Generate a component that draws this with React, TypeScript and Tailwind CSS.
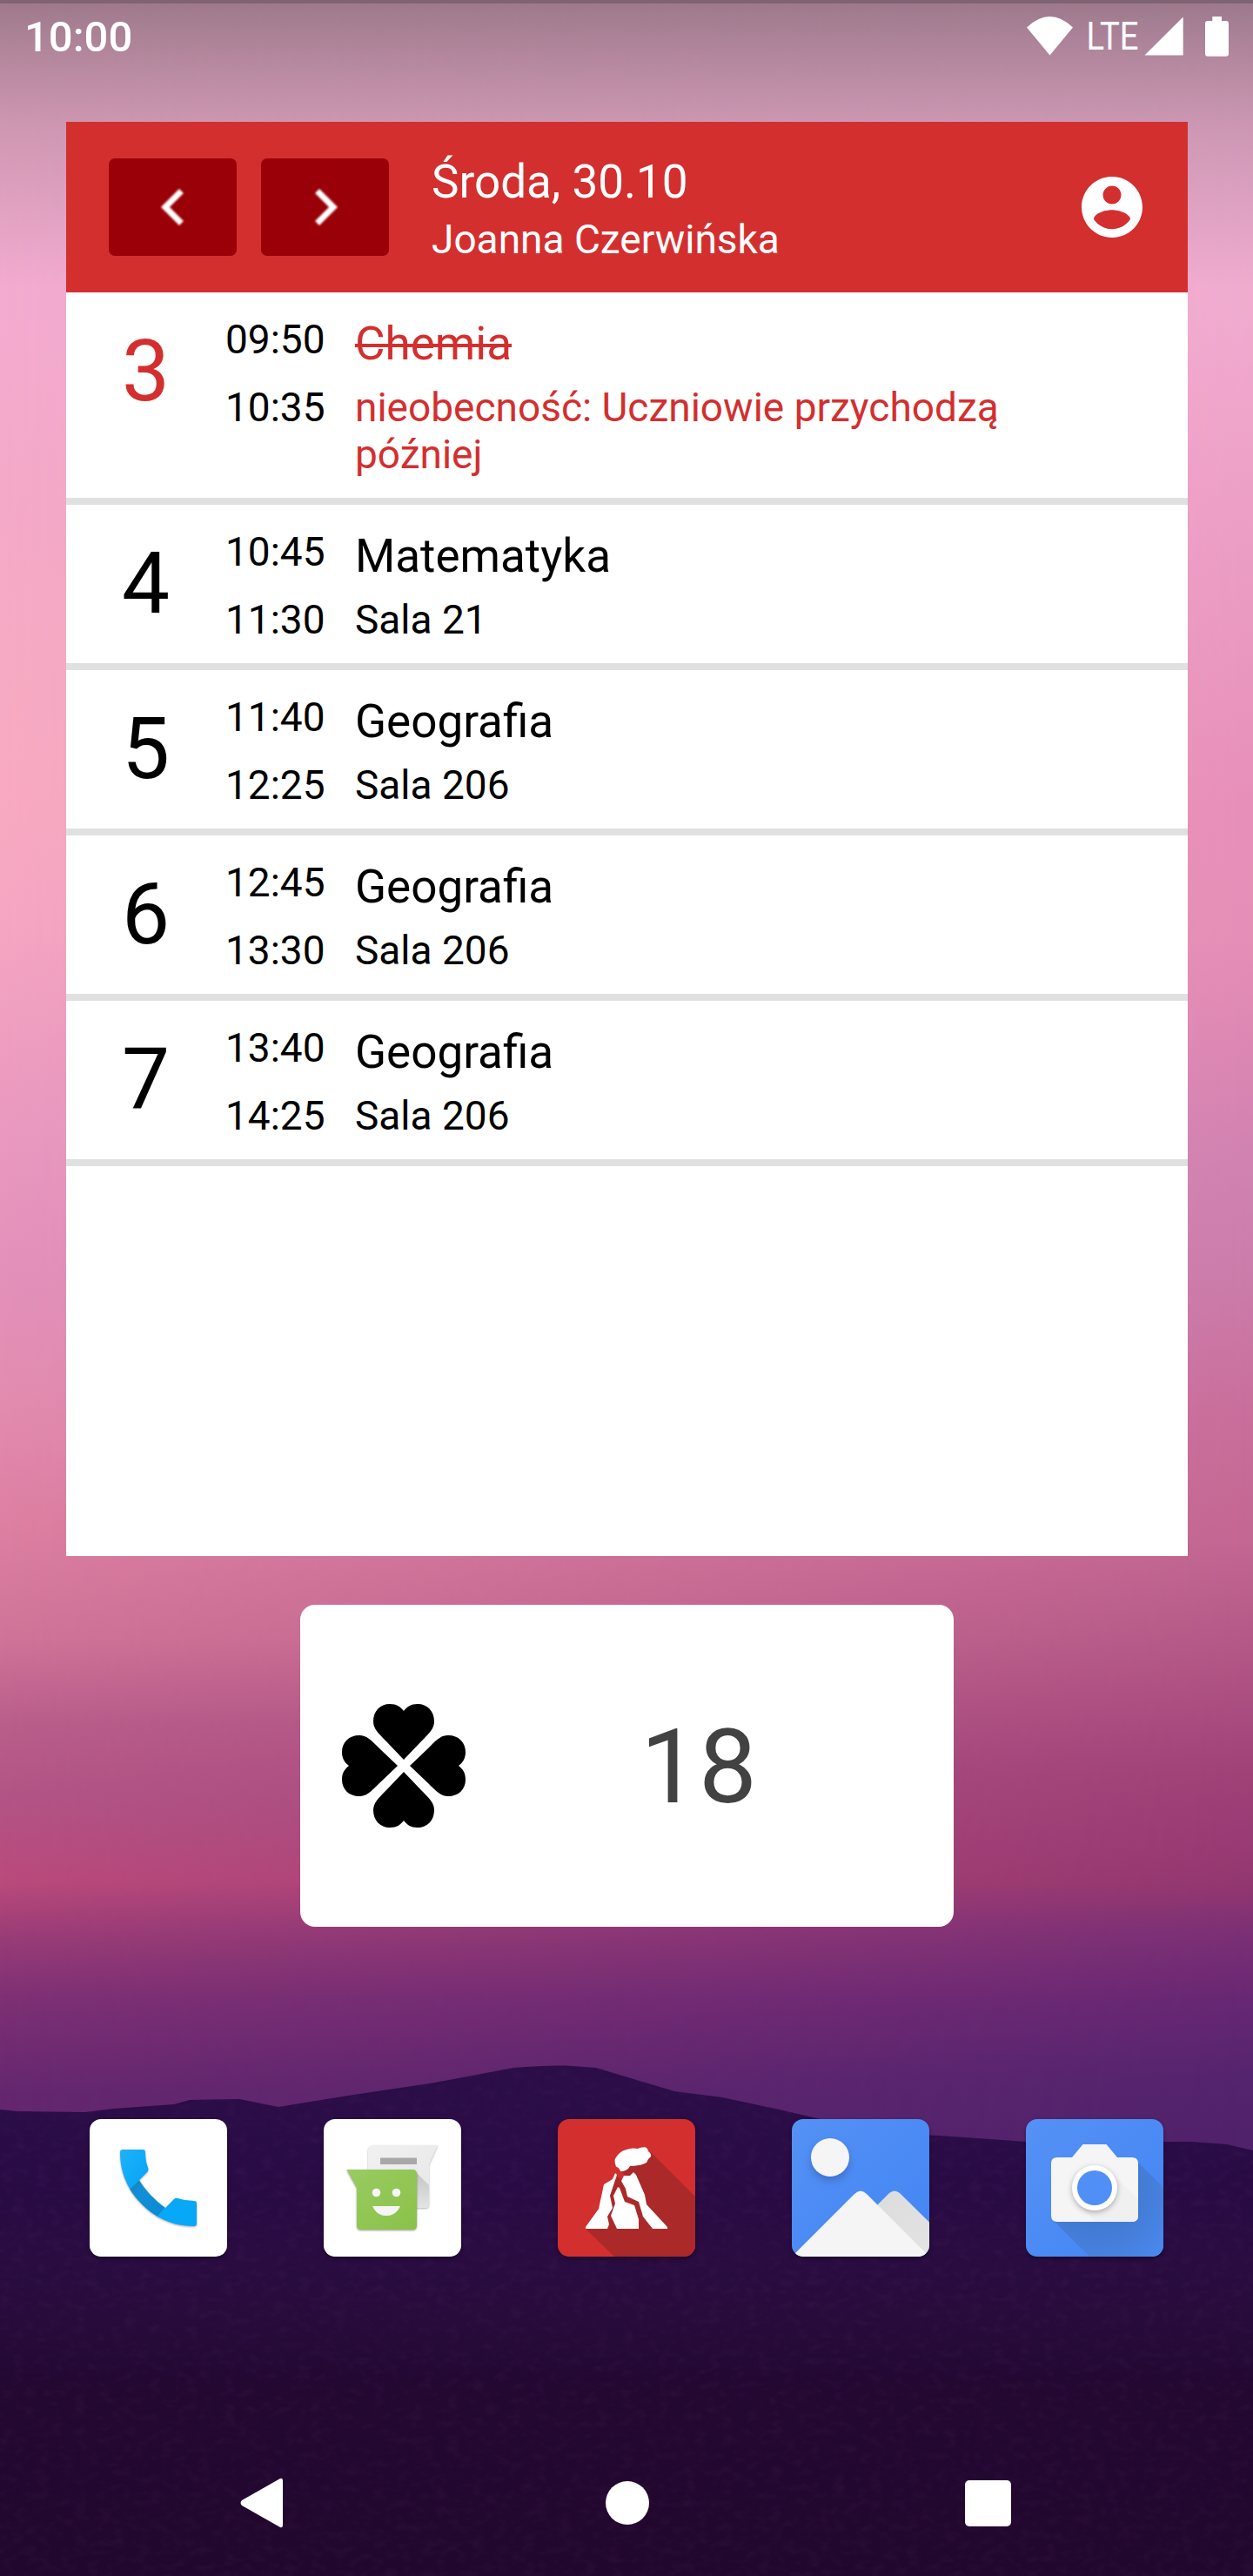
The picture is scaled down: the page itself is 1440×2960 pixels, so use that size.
import React from "react";

type Lesson = {
  number: number;
  start: string;
  end: string;
  subject: string;
  detail: string;
  cancelled?: boolean;
};

const lessons: Lesson[] = [
  { number: 3, start: "09:50", end: "10:35", subject: "Chemia", detail: "nieobecność: Uczniowie przychodzą później", cancelled: true },
  { number: 4, start: "10:45", end: "11:30", subject: "Matematyka", detail: "Sala 21" },
  { number: 5, start: "11:40", end: "12:25", subject: "Geografia", detail: "Sala 206" },
  { number: 6, start: "12:45", end: "13:30", subject: "Geografia", detail: "Sala 206" },
  { number: 7, start: "13:40", end: "14:25", subject: "Geografia", detail: "Sala 206" },
];

const hills =
  "M0 2424L20 2426L98 2427L130 2423L200 2418L218 2413L275 2412L320 2421L400 2408L500 2393L590 2376Q625 2373 650 2373.500L685 2376L725 2388L775 2403L830 2410L900 2425L985 2445Q1030 2453 1080 2454L1180 2461L1370 2461L1410 2464L1440 2471V2960H0Z";

function Wallpaper() {
  return (
    <svg className="absolute inset-0 h-full w-full" viewBox="0 0 1440 2960" preserveAspectRatio="none" aria-hidden="true">
      <defs>
        <linearGradient id="skyLeft" gradientUnits="userSpaceOnUse" x1="0" y1="0" x2="0" y2="2960">
          <stop offset="0" stopColor="#f3adcf" />
          <stop offset="0.12" stopColor="#f3abcf" />
          <stop offset="0.194" stopColor="#f4a9c8" />
          <stop offset="0.241" stopColor="#f6aac4" />
          <stop offset="0.306" stopColor="#f8aac2" />
          <stop offset="0.357" stopColor="#f5a6c2" />
          <stop offset="0.404" stopColor="#ee9ec0" />
          <stop offset="0.45" stopColor="#e897bf" />
          <stop offset="0.497" stopColor="#e391ba" />
          <stop offset="0.543" stopColor="#e38cb0" />
          <stop offset="0.59" stopColor="#dd80a2" />
          <stop offset="0.636" stopColor="#d07498" />
          <stop offset="0.669" stopColor="#b95e8b" />
          <stop offset="0.697" stopColor="#b25586" />
          <stop offset="0.73" stopColor="#ba4a7c" />
          <stop offset="0.753" stopColor="#983c76" />
          <stop offset="0.776" stopColor="#7e3074" />
          <stop offset="0.813" stopColor="#64276f" />
        </linearGradient>
        <linearGradient id="skyRight" gradientUnits="userSpaceOnUse" x1="0" y1="0" x2="0" y2="2960">
          <stop offset="0" stopColor="#f0acd0" />
          <stop offset="0.12" stopColor="#f0abcf" />
          <stop offset="0.148" stopColor="#f0a6cc" />
          <stop offset="0.242" stopColor="#ea99c0" />
          <stop offset="0.312" stopColor="#e78fb8" />
          <stop offset="0.364" stopColor="#e58eb6" />
          <stop offset="0.406" stopColor="#dc87b3" />
          <stop offset="0.458" stopColor="#cf81b0" />
          <stop offset="0.5" stopColor="#cb7ba9" />
          <stop offset="0.547" stopColor="#c96e9b" />
          <stop offset="0.599" stopColor="#c26692" />
          <stop offset="0.641" stopColor="#b25786" />
          <stop offset="0.688" stopColor="#a04178" />
          <stop offset="0.717" stopColor="#983a73" />
          <stop offset="0.731" stopColor="#93376f" />
          <stop offset="0.749" stopColor="#7c3075" />
          <stop offset="0.777" stopColor="#672773" />
          <stop offset="0.806" stopColor="#55246e" />
          <stop offset="0.829" stopColor="#50226b" />
        </linearGradient>
        <linearGradient id="fade" x1="0" y1="0" x2="1" y2="0">
          <stop offset="0" stopColor="#000" />
          <stop offset="1" stopColor="#fff" />
        </linearGradient>
        <mask id="rightMask">
          <rect width="1440" height="2960" fill="url(#fade)" />
        </mask>
        <linearGradient id="ground" gradientUnits="userSpaceOnUse" x1="0" y1="2370" x2="0" y2="2960">
          <stop offset="0" stopColor="#2b0d48" />
          <stop offset="0.25" stopColor="#290b44" />
          <stop offset="0.45" stopColor="#290c3e" />
          <stop offset="0.62" stopColor="#230832" />
          <stop offset="1" stopColor="#21072d" />
        </linearGradient>
        <linearGradient id="shade" gradientUnits="userSpaceOnUse" x1="0" y1="0" x2="0" y2="330">
          <stop offset="0" stopColor="#404040" stopOpacity="0.48" />
          <stop offset="0.45" stopColor="#505050" stopOpacity="0.22" />
          <stop offset="1" stopColor="#505050" stopOpacity="0" />
        </linearGradient>
        <filter id="soil" x="0" y="0" width="1" height="1">
          <feTurbulence type="fractalNoise" baseFrequency="0.07 0.11" numOctaves="2" seed="4" />
          <feColorMatrix values="0 0 0 0 0.36  0 0 0 0 0.1  0 0 0 0 0.4  1.600 0 0 0 -0.720" />
          <feComposite in2="SourceGraphic" operator="in" />
        </filter>
      </defs>
      <rect width="1440" height="2960" fill="url(#skyLeft)" />
      <rect width="1440" height="2960" fill="url(#skyRight)" mask="url(#rightMask)" />
      <path d={hills} fill="url(#ground)" />
      <path d={hills} filter="url(#soil)" opacity="0.09" />
      <rect width="1440" height="330" fill="url(#shade)" />
      <rect width="1440" height="4" fill="#4b3a48" fillOpacity="0.35" />
    </svg>
  );
}

function StatusBar() {
  return (
    <div className="flex h-[140px] items-start justify-between">
      <div className="ml-[28px] mt-[14px] text-[49px] font-medium leading-[58px]">10:00</div>
      <svg className="mr-[20px] mt-[10px] h-[60px] w-[250px]" viewBox="1170 10 250 60" fill="#fff">
        <path d="M1180 31.500Q1206.500 6.500 1233 31.500L1206.500 63.500Z" />
        <text x="1248.500" y="57" fontSize="43.600" textLength="60" lengthAdjust="spacingAndGlyphs">LTE</text>
        <path d="M1359.700 19.500V63.500H1315.500Z" />
        <path d="M1393.300 19H1404V24H1409Q1412 24 1412 27V61.500Q1412 64.700 1409 64.700H1388Q1385 64.700 1385 61.500V27Q1385 24 1388 24H1393.300Z" />
      </svg>
    </div>
  );
}

function ArrowButton({ direction }: { direction: "left" | "right" }) {
  return (
    <button className="flex h-[112px] w-[147px] items-center justify-center rounded-[7px] bg-[#9a0007]" aria-label={direction}>
      <svg className="h-[84px] w-[84px] blur-[1px]" viewBox="0 0 24 24" fill="#fff">
        {direction === "left" ? (
          <path d="M15.410 7.410L14 6l-6 6 6 6 1.410-1.410L10.830 12z" />
        ) : (
          <path d="M10 6L8.590 7.410 13.170 12l-4.580 4.590L10 18l6-6z" />
        )}
      </svg>
    </button>
  );
}

function LessonRow({ lesson }: { lesson: Lesson }) {
  const accent = lesson.cancelled ? "text-[#d32f2f]" : "text-black";
  return (
    <div className="flex items-start border-b-[8px] border-[#e0e0e0] pb-[23px] text-black">
      <div className={`mt-[33px] w-[183px] text-center text-[98px] leading-[115px] ${accent}`}>{lesson.number}</div>
      <div className="mt-[27px] flex w-[149px] flex-col gap-[24px] text-[46px] leading-[54px]">
        <span>{lesson.start}</span>
        <span>{lesson.end}</span>
      </div>
      <div className={`mt-[28px] flex w-[800px] flex-col items-start gap-[15px] ${accent}`}>
        <span className={`text-[53px] leading-[62px] ${lesson.cancelled ? "line-through decoration-[4px]" : ""}`}>{lesson.subject}</span>
        <span className="text-[46px] leading-[54px]">{lesson.detail}</span>
      </div>
    </div>
  );
}

function TimetableWidget() {
  return (
    <section className="ml-[76px] h-[1648px] w-[1289px] bg-white">
      <header className="flex h-[196px] items-center bg-[#d32f2f] pl-[49px] pr-[45px]">
        <ArrowButton direction="left" />
        <div className="w-[28px]" />
        <ArrowButton direction="right" />
        <div className="ml-[49px] mt-[4px] flex-1">
          <div className="text-[53px] leading-[62px]">Środa, 30.10</div>
          <div className="mt-[8px] text-[46px] leading-[54px]">Joanna Czerwińska</div>
        </div>
        <svg className="h-[84px] w-[84px]" viewBox="0 0 24 24" fill="#fff">
          <path d="M12 2C6.480 2 2 6.480 2 12s4.480 10 10 10 10-4.480 10-10S17.520 2 12 2zm0 3c1.660 0 3 1.340 3 3s-1.340 3-3 3-3-1.340-3-3 1.340-3 3-3zm0 14.200c-2.500 0-4.710-1.280-6-3.220.030-1.990 4-3.080 6-3.080 1.990 0 5.970 1.090 6 3.080-1.290 1.940-3.500 3.220-6 3.220z" />
        </svg>
      </header>
      {lessons.map((lesson) => (
        <LessonRow key={lesson.number} lesson={lesson} />
      ))}
    </section>
  );
}

const leaf =
  "M0 -7L20 -28C30 -38 35 -43 35 -51C35 -63 27 -71 16 -71C8 -71 4 -68 0 -63C-4 -68 -8 -71 -16 -71C-27 -71 -35 -63 -35 -51C-35 -43 -30 -38 -20 -28Z";

function LuckyNumberWidget() {
  return (
    <section className="ml-[345px] mt-[56px] flex h-[370px] w-[751px] items-center rounded-[17px] bg-white">
      <svg className="ml-[47px] h-[144px] w-[144px] blur-[0.7px]" viewBox="-72 -72 144 144">
        {[0, 90, 180, 270].map((angle) => (
          <path key={angle} d={leaf} transform={`rotate(${angle})`} />
        ))}
        <path d="M-34 -34L34 34M34 -34L-34 34" stroke="#fff" strokeWidth="7" />
      </svg>
      <div className="ml-[200px] mt-[3px] text-[119px] leading-[139px] text-[#424242]">18</div>
    </section>
  );
}

function PhoneIcon() {
  return (
    <svg className="h-full w-full" viewBox="0 0 158 158">
      <defs>
        <linearGradient id="phoneBlue" x1="0" y1="0" x2="1" y2="1">
          <stop offset="0" stopColor="#1fb1fa" />
          <stop offset="1" stopColor="#03a5f5" />
        </linearGradient>
        <linearGradient id="phoneDark" x1="0" y1="0" x2="1" y2="1">
          <stop offset="0" stopColor="#157fbd" />
          <stop offset="0.3" stopColor="#118fd6" />
          <stop offset="1" stopColor="#0a8ad6" />
        </linearGradient>
      </defs>
      <g className="drop-shadow-[0_1px_1px_rgba(0,0,0,0.35)]">
        <path d="M46 80L57 70C64 82 75 93 87 102L78 112C65 104 54 93 46 80Z" fill="url(#phoneDark)" />
        <path d="M38 35H61Q64 35 64 38C64 45 65 51 67.500 57Q67.500 60 65 62L46.500 80.500C39 68 35 54 35 38Q35 35 38 35Z" fill="url(#phoneBlue)" />
        <path d="M77.500 111.700L97 92Q99 90 101 91Q110 94 120 94Q123 94 123 97V120Q123 123 120 123C105 123 90 119 77.500 111.700Z" fill="#07a8f7" />
      </g>
    </svg>
  );
}

function MessagesIcon() {
  return (
    <svg className="h-full w-full" viewBox="0 0 158 158">
      <defs>
        <linearGradient id="paper" x1="0" y1="0" x2="1" y2="1">
          <stop offset="0" stopColor="#f1f1f1" />
          <stop offset="1" stopColor="#e6e6e6" />
        </linearGradient>
        <linearGradient id="leafGreen" x1="0" y1="0" x2="1" y2="1">
          <stop offset="0" stopColor="#99cb62" />
          <stop offset="1" stopColor="#8ac248" />
        </linearGradient>
        <linearGradient id="paperShade" x1="0" y1="0" x2="0" y2="1">
          <stop offset="0" stopColor="#c4c4c4" />
          <stop offset="1" stopColor="#e4e4e4" />
        </linearGradient>
      </defs>
      <g className="drop-shadow-[0_1px_1px_rgba(0,0,0,0.3)]">
        <path d="M58 30H131L121 52V98Q121 102 117 102H56Q51 102 51 97V37Q51 30 58 30Z" fill="url(#paper)" />
      </g>
      <path d="M106 61L121 76V98Q121 102 117 102H106Z" fill="url(#paperShade)" />
      <rect x="65" y="44.500" width="42" height="7.500" fill="#a8a8a8" />
      <g className="drop-shadow-[0_1px_1px_rgba(0,0,0,0.4)]">
        <path d="M26.500 58H102Q107 58 107 63V122Q107 127 102 127H43Q38 127 38 122V79Z" fill="url(#leafGreen)" />
      </g>
      <circle cx="60.500" cy="84.500" r="4.800" fill="#f5f5f5" />
      <circle cx="83.500" cy="84.500" r="4.800" fill="#f5f5f5" />
      <path d="M56 100H88Q83 111 72 111Q61 111 56 100Z" fill="#f5f5f5" />
    </svg>
  );
}

function VolcanoIcon() {
  return (
    <svg className="h-full w-full" viewBox="0 0 158 158">
      <path d="M107 38L158 89V158H65L32 126L60 80L72 61Z" fill="#ab2929" />
      <path d="M58 55L73 59L78 66L74 70L66 64Z" fill="#d32f2f" />
      <g fill="#fff">
        <path d="M72 60Q71 56 67 54.500Q64 47 67 44Q71 37 79 35Q84 32.500 92 34Q95 32 98 32.500Q103 31.500 104 37Q108 40 107 43Q104 45 102 50Q96 53 93 53Q88 54 83 54Q80 60 72 60Z" />
        <path d="M66 62L68 64L60 88L63 102L57 112L59 121L57 126H32V124L47 103L53 75L63 69Z" />
        <path d="M69 78L71 79L77 95L88 99L93 115V126H68L61 111L66 97L64 88Z" />
        <path d="M76 65L83 65L87 61L90 64L100 87L102 98L126 124V126H109L98 112L93 95L80 89L78 80L73 71Z" />
      </g>
    </svg>
  );
}

function GalleryIcon() {
  return (
    <svg className="h-full w-full" viewBox="0 0 158 158">
      <defs>
        <linearGradient id="backHill" x1="0" y1="0" x2="1" y2="1">
          <stop offset="0" stopColor="#dcdcdc" />
          <stop offset="1" stopColor="#e3e3e3" />
        </linearGradient>
      </defs>
      <g className="drop-shadow-[0_5px_5px_rgba(20,50,110,0.3)]">
        <circle cx="44" cy="44" r="22" fill="#f5f5f5" />
      </g>
      <path d="M95 102L112 85Q118 80 124 85L158 118.500V158H140Z" fill="url(#backHill)" />
      <path d="M4 154L72 86Q79 79 86 86L154 154Q150 158 146 158H12Q7 158 4 154Z" fill="#f5f5f5" />
    </svg>
  );
}

function CameraIcon() {
  return (
    <svg className="h-full w-full" viewBox="0 0 158 158">
      <defs>
        <radialGradient id="cameraShade" gradientUnits="userSpaceOnUse" cx="79" cy="79" r="105">
          <stop offset="0.3" stopColor="#3f78cd" />
          <stop offset="0.65" stopColor="#457fdb" />
          <stop offset="1" stopColor="#4a88ee" />
        </radialGradient>
      </defs>
      <path d="M127 48L158 78V158H73L33 118Z" fill="url(#cameraShade)" />
      <path d="M36 44H53L65.500 29H92.500L105 44H122Q129 44 129 51V111Q129 118 122 118H36Q29 118 29 111V51Q29 44 36 44Z" fill="#f5f5f5" />
      <path d="M97 61L129 92V111Q129 118 122 118H80L60 97Z" fill="#f0f0f0" />
      <g className="drop-shadow-[0_2px_3px_rgba(0,0,0,0.3)]">
        <circle cx="79" cy="79" r="26" fill="#fff" />
      </g>
      <circle cx="79" cy="79" r="20" fill="#508ff5" />
    </svg>
  );
}

const tile = "h-[158px] w-[158px] overflow-hidden rounded-[13px] shadow-[0_2px_4px_rgba(0,0,0,0.4)]";

function Dock() {
  return (
    <div className="mt-[221px] flex justify-between pl-[103px] pr-[103px]">
      <div className={`${tile} bg-white`}><PhoneIcon /></div>
      <div className={`${tile} bg-white`}><MessagesIcon /></div>
      <div className={`${tile} bg-[#d32f2f]`}><VolcanoIcon /></div>
      <div className={`${tile} bg-linear-to-br from-[#5591f5] to-[#4285f4]`}><GalleryIcon /></div>
      <div className={`${tile} bg-linear-to-br from-[#5591f5] to-[#4285f4]`}><CameraIcon /></div>
    </div>
  );
}

function NavigationBar() {
  return (
    <div className="mt-[251px] flex items-center justify-between pl-[272px] pr-[275px]">
      <svg className="h-[64px] w-[56px]" viewBox="0 0 56 64" fill="#fff">
        <path d="M50 4Q53 3 53 7V57Q53 61 50 60L6 35Q3 32 6 29Z" />
      </svg>
      <div className="ml-[4px] h-[50px] w-[50px] rounded-full bg-white" />
      <div className="mr-[3px] h-[53px] w-[53px] rounded-[5px] bg-white" />
    </div>
  );
}

export default function App() {
  return (
    <main className="relative h-[2960px] w-[1440px] overflow-hidden bg-[#21072d] font-[Roboto,sans-serif] text-white">
      <Wallpaper />
      <div className="relative flex flex-col">
        <StatusBar />
        <TimetableWidget />
        <LuckyNumberWidget />
        <Dock />
        <NavigationBar />
      </div>
    </main>
  );
}
